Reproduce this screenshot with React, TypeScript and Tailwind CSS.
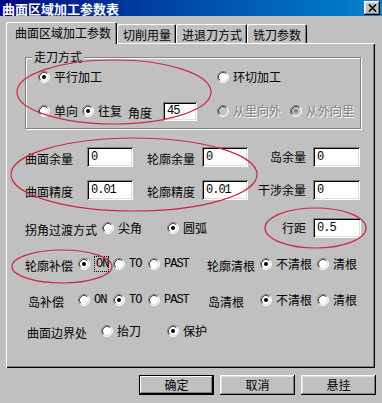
import React from "react";

const raised =
  "shadow-[inset_-1px_-1px_#000,inset_1px_1px_#fff,inset_-2px_-2px_#808080,inset_2px_2px_#dfdfdf]";
const sunken =
  "shadow-[inset_1px_1px_#808080,inset_-1px_-1px_#fff,inset_2px_2px_#000,inset_-2px_-2px_#dfdfdf]";

function Radio({ checked = false, disabled = false }: { checked?: boolean; disabled?: boolean }) {
  return (
    <svg width="12" height="12" viewBox="0 0 12 12" className="shrink-0">
      <circle cx="6" cy="6" r="5" fill={disabled ? "#c0c0c0" : "#fff"} />
      <path d="M2.11 9.89 A5.5 5.5 0 0 1 9.89 2.11" stroke="#808080" fill="none" />
      <path d="M9.89 2.11 A5.5 5.5 0 0 1 2.11 9.89" stroke="#fff" fill="none" />
      <path d="M2.82 9.18 A4.5 4.5 0 0 1 9.18 2.82" stroke="#404040" fill="none" />
      <path d="M9.18 2.82 A4.5 4.5 0 0 1 2.82 9.18" stroke="#dfdfdf" fill="none" />
      {checked && <circle cx="6" cy="6" r="2" fill={disabled ? "#808080" : "#000"} />}
    </svg>
  );
}

function Option({
  label,
  checked = false,
  disabled = false,
  mono = false,
  focus = false,
}: {
  label: string;
  checked?: boolean;
  disabled?: boolean;
  mono?: boolean;
  focus?: boolean;
}) {
  return (
    <div className="flex items-center gap-[4px]">
      <Radio checked={checked} disabled={disabled} />
      <span
        className={[
          mono ? "font-['Liberation_Mono',monospace] text-[12px] tracking-[-1px]" : "text-[12px]",
          disabled ? "text-[#808080] [text-shadow:1px_1px_0_#fff]" : "",
          focus ? "border border-dotted border-black pl-[1px] leading-[14px]" : "leading-[12px]",
        ].join(" ")}
      >
        {label}
      </span>
    </div>
  );
}

function Field({ value, className }: { value: string; className: string }) {
  return (
    <div
      className={`${className} bg-white ${sunken} flex items-center pl-[4px] font-['Liberation_Mono',monospace] text-[12px] tracking-[-1px] text-black`}
    >
      {value}
    </div>
  );
}

function Label({ text }: { text: string }) {
  return <span className="text-[12px] leading-[12px]">{text}</span>;
}

export default function App() {
  return (
    <div className="relative w-[382px] h-[403px] overflow-hidden bg-[#c0c0c0] text-black font-['Noto_Sans_CJK_SC',sans-serif]">
      {/* title bar */}
      <div className="h-[16px] flex items-center justify-between pl-[2px] pr-[2px] bg-linear-to-r from-[#000080] to-[#1084d0]">
        <span className="text-white font-bold text-[13px] leading-[13px]">曲面区域加工参数表</span>
        <div className={`w-[16px] h-[14px] bg-[#c0c0c0] ${raised} flex items-center justify-center`}>
          <svg width="9" height="8" viewBox="0 0 9 8">
            <path d="M1 0.5 L8 7.5 M8 0.5 L1 7.5" stroke="#000" strokeWidth="1.6" />
          </svg>
        </div>
      </div>

      {/* tabs */}
      <div className="mt-[6px] h-[21px] pl-[6px] flex items-end text-[12px] leading-[12px]">
        <div className="relative z-10 w-[111px] h-[22px] -mb-[1px] pl-[9px] flex items-center bg-[#c0c0c0] rounded-t-[2px] shadow-[inset_1px_1px_#fff,inset_-1px_0_#000,inset_-2px_0_#808080]">
          曲面区域加工参数
        </div>
        <div className="w-[59px] h-[19px] pl-[6px] pt-[2px] flex items-center rounded-t-[2px] shadow-[inset_1px_1px_#fff,inset_-1px_0_#000,inset_-2px_0_#808080]">
          切削用量
        </div>
        <div className="w-[71px] h-[19px] pl-[6px] pt-[2px] flex items-center rounded-t-[2px] shadow-[inset_1px_1px_#fff,inset_-1px_0_#000,inset_-2px_0_#808080]">
          进退刀方式
        </div>
        <div className="w-[60px] h-[19px] pl-[6px] pt-[2px] flex items-center rounded-t-[2px] shadow-[inset_1px_1px_#fff,inset_-1px_0_#000,inset_-2px_0_#808080]">
          铣刀参数
        </div>
      </div>

      {/* tab panel */}
      <div className="ml-[6px] w-[369px] h-[325px] flex flex-col shadow-[inset_1px_1px_#fff,inset_-1px_-1px_#000,inset_-2px_-2px_#808080]">
        {/* group box */}
        <div className="relative ml-[19px] mt-[14px] w-[336px] h-[72px] border border-[#808080] shadow-[inset_1px_1px_#fff,1px_1px_#fff] pl-[12px] flex flex-col">
          <span className="absolute left-[6px] -top-[7px] px-[2px] bg-[#c0c0c0] text-[12px] leading-[12px]">走刀方式</span>
          <div className="mt-[9px] h-[20px] flex items-center">
            <div className="w-[179px] shrink-0">
              <Option label="平行加工" checked />
            </div>
            <Option label="环切加工" />
          </div>
          <div className="mt-[14px] h-[20px] flex items-center">
            <div className="w-[44px] shrink-0">
              <Option label="单向" />
            </div>
            <div className="w-[46px] shrink-0">
              <Option label="往复" checked />
            </div>
            <div className="w-[35px] shrink-0">
              <Label text="角度" />
            </div>
            <div className="w-[54px] shrink-0">
              <Field value="45" className="w-[34px] h-[19px]" />
            </div>
            <div className="w-[73px] shrink-0">
              <Option label="从里向外" disabled />
            </div>
            <Option label="从外向里" checked disabled />
          </div>
        </div>

        {/* allowance rows */}
        <div className="mt-[18px] h-[20px] pl-[19px] flex items-center">
          <div className="w-[62px] shrink-0"><Label text="曲面余量" /></div>
          <div className="w-[60px] shrink-0"><Field value="0" className="w-[46px] h-[20px]" /></div>
          <div className="w-[55px] shrink-0"><Label text="轮廓余量" /></div>
          <Field value="0" className="w-[46px] h-[20px] shrink-0" />
          <div className="w-[65px] shrink-0 flex justify-end pr-[7px]"><Label text="岛余量" /></div>
          <Field value="0" className="w-[47px] h-[20px] shrink-0" />
        </div>
        <div className="mt-[13px] h-[20px] pl-[19px] flex items-center">
          <div className="w-[62px] shrink-0"><Label text="曲面精度" /></div>
          <div className="w-[60px] shrink-0"><Field value="0.01" className="w-[46px] h-[20px]" /></div>
          <div className="w-[55px] shrink-0"><Label text="轮廓精度" /></div>
          <Field value="0.01" className="w-[46px] h-[20px] shrink-0" />
          <div className="w-[65px] shrink-0 flex justify-end pr-[7px]"><Label text="干涉余量" /></div>
          <Field value="0" className="w-[47px] h-[20px] shrink-0" />
        </div>

        {/* corner transition + step */}
        <div className="mt-[18px] h-[20px] pl-[19px] flex items-center">
          <div className="w-[77px] shrink-0"><Label text="拐角过渡方式" /></div>
          <div className="w-[65px] shrink-0"><Option label="尖角" /></div>
          <div className="w-[81px] shrink-0"><Option label="圆弧" checked /></div>
          <div className="w-[65px] shrink-0 flex justify-end pr-[7px]"><Label text="行距" /></div>
          <Field value="0.5" className="w-[48px] h-[20px] shrink-0" />
        </div>

        {/* contour compensation */}
        <div className="mt-[16px] h-[20px] pl-[19px] flex items-center">
          <div className="w-[53px] shrink-0"><Label text="轮廓补偿" /></div>
          <div className="w-[35px] shrink-0"><Option label="ON" mono checked focus /></div>
          <div className="w-[35px] shrink-0"><Option label="TO" mono /></div>
          <div className="w-[59px] shrink-0"><Option label="PAST" mono /></div>
          <div className="w-[53px] shrink-0"><Label text="轮廓清根" /></div>
          <div className="w-[57px] shrink-0"><Option label="不清根" checked /></div>
          <Option label="清根" />
        </div>

        {/* island compensation */}
        <div className="mt-[16px] h-[20px] pl-[19px] flex items-center">
          <div className="w-[53px] shrink-0 pl-[3px]"><Label text="岛补偿" /></div>
          <div className="w-[35px] shrink-0"><Option label="ON" mono /></div>
          <div className="w-[35px] shrink-0"><Option label="TO" mono checked /></div>
          <div className="w-[59px] shrink-0"><Option label="PAST" mono /></div>
          <div className="w-[53px] shrink-0 pl-[1px]"><Label text="岛清根" /></div>
          <div className="w-[57px] shrink-0"><Option label="不清根" checked /></div>
          <Option label="清根" />
        </div>

        {/* boundary */}
        <div className="mt-[11px] h-[20px] pl-[19px] flex items-center">
          <div className="w-[76px] shrink-0 pl-[2px]"><Label text="曲面边界处" /></div>
          <div className="w-[66px] shrink-0"><Option label="抬刀" /></div>
          <Option label="保护" checked />
        </div>
      </div>

      {/* buttons */}
      <div className="mt-[7px] pr-[6px] flex justify-end gap-[6px] text-[12px]">
        <div className="w-[75px] h-[20px] border border-black flex items-center justify-center shadow-[inset_-1px_-1px_#000,inset_1px_1px_#fff,inset_-2px_-2px_#808080]">
          确定
        </div>
        <div className={`w-[75px] h-[20px] flex items-center justify-center ${raised}`}>取消</div>
        <div className={`w-[75px] h-[20px] flex items-center justify-center ${raised}`}>悬挂</div>
      </div>

      {/* red hand-drawn annotation ellipses */}
      <svg className="absolute inset-0 pointer-events-none" width="382" height="403" viewBox="0 0 382 403">
        <g fill="none" stroke="#cc2a44" strokeWidth="1.2">
          <ellipse cx="114" cy="92" rx="97" ry="32" />
          <ellipse cx="134" cy="174.5" rx="123" ry="36.5" />
          <ellipse cx="315.5" cy="228" rx="50.5" ry="20" />
          <ellipse cx="62" cy="266.5" rx="50" ry="16.5" />
        </g>
      </svg>
    </div>
  );
}
